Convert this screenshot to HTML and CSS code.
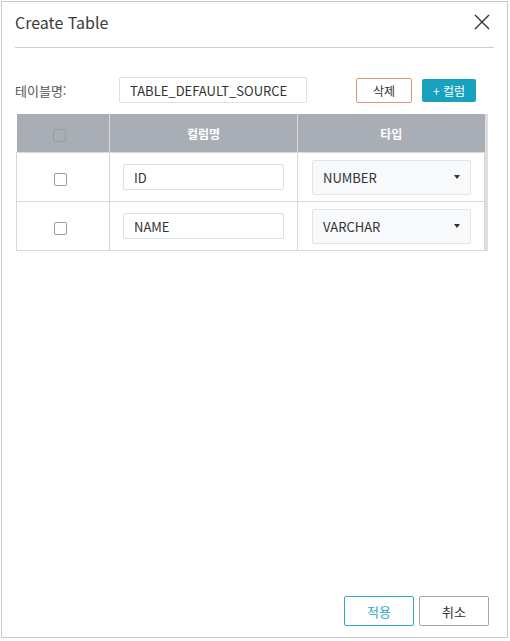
FILE: index.html
```html
<!DOCTYPE html>
<html lang="ko">
<head>
  <meta charset="UTF-8" />
  <title>Create Table</title>
  <link rel="stylesheet" href="styles.css">
</head>
<body>
  <div class="dialog">
    <div class="dialog-head">
      <div class="dialog-title">Create Table</div>
      <button class="close-btn" title="닫기">
        <svg width="16" height="16" viewBox="0 0 16 16">
          <path d="M1 1 L15 15 M15 1 L1 15" stroke="#333" stroke-width="1.4" fill="none"/>
        </svg>
      </button>
    </div>

    <div class="toolbar">
      <label class="field-label">테이블명:</label>
      <input class="text-input name-input" type="text" value="TABLE_DEFAULT_SOURCE">
      <button class="btn delete-btn">삭제</button>
      <button class="btn add-btn">+ 컬럼</button>
    </div>

    <div class="grid-wrap">
      <table class="grid">
        <colgroup>
          <col class="col-check">
          <col class="col-name">
          <col class="col-type">
        </colgroup>
        <thead>
          <tr>
            <th class="check-cell"><span class="checkbox head-check"></span></th>
            <th>컬럼명</th>
            <th>타입</th>
          </tr>
        </thead>
        <tbody>
          <tr>
            <td class="check-cell"><span class="checkbox"></span></td>
            <td><input class="text-input cell-input" type="text" value="ID"></td>
            <td><div class="select-box"><span>NUMBER</span><span class="caret"></span></div></td>
          </tr>
          <tr>
            <td class="check-cell"><span class="checkbox"></span></td>
            <td><input class="text-input cell-input" type="text" value="NAME"></td>
            <td><div class="select-box"><span>VARCHAR</span><span class="caret"></span></div></td>
          </tr>
        </tbody>
      </table>
    </div>

    <div class="dialog-foot">
      <button class="btn apply-btn">적용</button>
      <button class="btn cancel-btn">취소</button>
    </div>
  </div>
</body>
</html>
```

FILE: styles.css
```css
body {
  margin: 0;
  font-family: "Noto Sans CJK KR", "Noto Sans", sans-serif;
  color: #333;
  background: #fff;
}

.dialog {
  box-sizing: border-box;
  width: 507px;
  height: 637px;
  margin: 1px 0 0 1px;
  border: 1px solid #c9c9c9;
  display: flex;
  flex-direction: column;
}

.dialog-head {
  margin: 0 13px 0 13px;
  padding-bottom: 6px;
  box-sizing: border-box;
  border-bottom: 1px solid #cfcfcf;
  height: 46px;
  display: flex;
  justify-content: space-between;
  align-items: center;
}

.dialog-title {
  font-size: 16px;
  color: #3a3a3a;
}

.close-btn {
  background: transparent;
  border: none;
  padding: 0;
  margin-right: 4px;
  width: 16px;
  height: 16px;
  cursor: pointer;
}

.close-btn svg {
  display: block;
}

.toolbar {
  display: flex;
  align-items: center;
  margin: 29px 0 0 13px;
  height: 26px;
}

.field-label {
  width: 104px;
  font-size: 13px;
  color: #555;
}

.text-input {
  box-sizing: border-box;
  height: 26px;
  border: 1px solid #dcdfe4;
  border-radius: 2px;
  font-family: inherit;
  font-size: 13px;
  color: #333;
  padding: 0 10px;
  background: #fff;
}

.name-input {
  width: 188px;
}

.btn {
  box-sizing: border-box;
  font-family: inherit;
  font-size: 12px;
  cursor: pointer;
  border-radius: 2px;
  padding: 0;
}

.delete-btn {
  width: 56px;
  height: 25px;
  margin-left: 49px;
  background: #fff;
  border: 1px solid #e0937d;
  color: #333;
}

.add-btn {
  width: 54px;
  height: 23px;
  margin-left: 10px;
  background: #17a2c0;
  border: none;
  color: #fff;
}

.grid-wrap {
  margin: 11px 0 0 14px;
  width: 472px;
  border-right: 3px solid #dedede;
  box-sizing: border-box;
}

.grid {
  width: 100%;
  border-collapse: collapse;
  table-layout: fixed;
}

.col-check {
  width: 93px;
}

.col-name {
  width: 188px;
}

.grid th {
  height: 38px;
  padding: 0;
  background: #a9aeb6;
  color: #fff;
  font-size: 12px;
  font-weight: bold;
  border-left: 1px solid #d8dadd;
  text-align: center;
}

.grid th:first-child {
  border-left: none;
}

.grid td {
  height: 49px;
  padding: 0 14px 0 13px;
  border: 1px solid #d8d8d8;
  box-sizing: border-box;
}

.grid .check-cell {
  text-align: center;
  padding: 0 6px 0 0;
}

.checkbox {
  display: inline-block;
  width: 11px;
  height: 11px;
  border: 1px solid #9a9ea4;
  border-radius: 2px;
  background: #fff;
  vertical-align: middle;
}

.head-check {
  background: #a9aeb6;
  border-color: #989ca3;
}

.cell-input {
  width: 161px;
  display: block;
}

.select-box {
  box-sizing: border-box;
  width: 159px;
  height: 35px;
  margin-left: 1px;
  border: 1px solid #dfe5ef;
  border-radius: 2px;
  background: #f8f9fb;
  display: flex;
  align-items: center;
  justify-content: space-between;
  padding: 0 10px;
  font-size: 13px;
  color: #333;
}

.caret {
  width: 0;
  height: 0;
  border-left: 3px solid transparent;
  border-right: 3px solid transparent;
  border-top: 4px solid #333;
}

.dialog-foot {
  margin-top: auto;
  display: flex;
  justify-content: flex-end;
  gap: 5px;
  padding: 0 18px 11px 0;
}

.apply-btn,
.cancel-btn {
  width: 70px;
  height: 30px;
  background: #fff;
  font-size: 13px;
}

.apply-btn {
  border: 1px solid #2aa8c6;
  color: #2aa8c6;
}

.cancel-btn {
  border: 1px solid #a3a5ad;
  color: #333;
}
```
